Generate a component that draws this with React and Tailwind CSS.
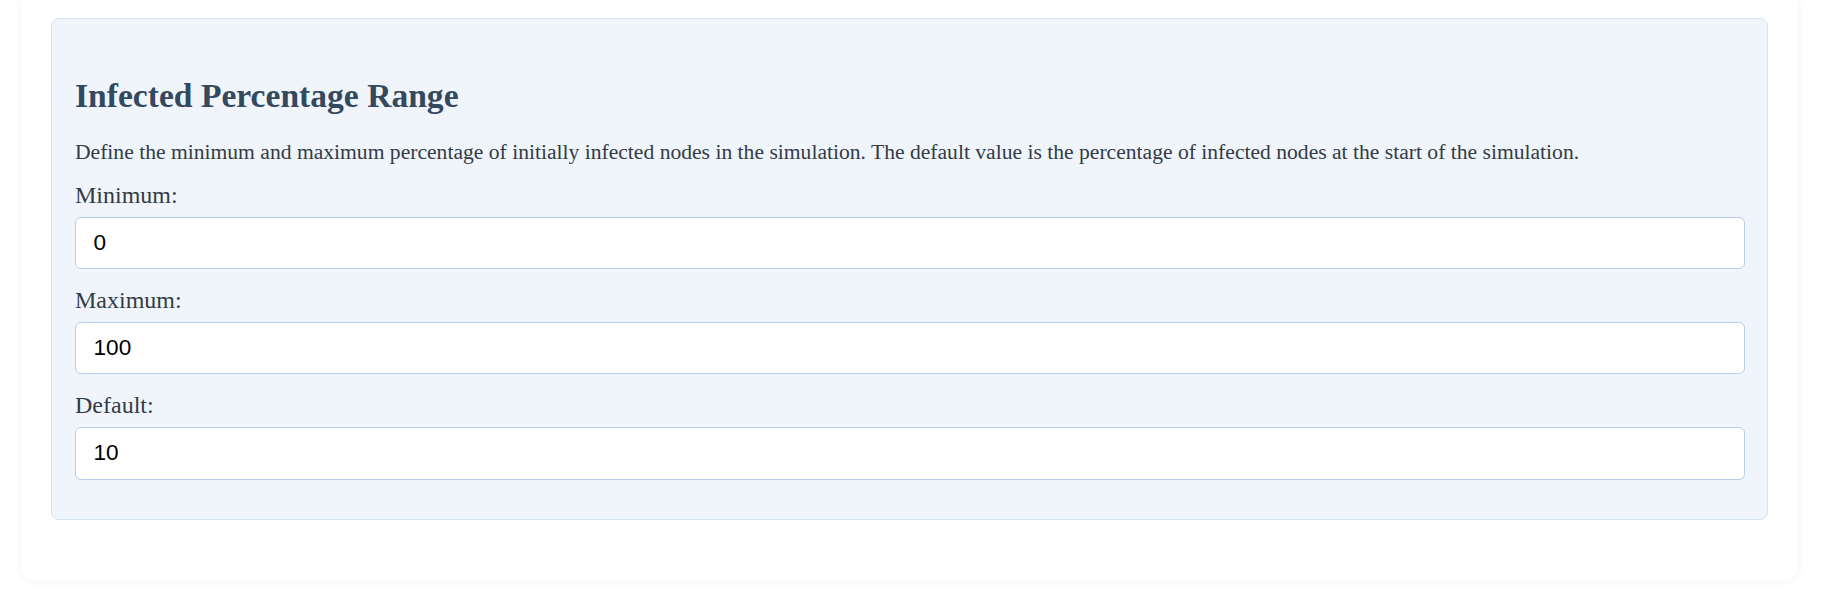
import React, { useState } from 'react';

const fields = [
  { id: 'min', label: 'Minimum:', value: '0' },
  { id: 'max', label: 'Maximum:', value: '100' },
  { id: 'def', label: 'Default:', value: '10' },
];

const RangeField = ({ id, label, value, onChange }) => (
  <div className="mb-[18px]">
    <label htmlFor={id} className="block text-[24px] leading-[27.6px] mb-[7px] text-[#333b46]">
      {label}
    </label>
    <input
      id={id}
      type="number"
      value={value}
      onChange={e => onChange(id, e.target.value)}
      className="block w-full h-[52.6px] px-[17.5px] bg-white border border-[#b4cfea] rounded-[6px] text-[22.6px] text-black font-['Liberation_Sans',Arial,sans-serif] outline-none [appearance:textfield] [&::-webkit-inner-spin-button]:appearance-none [&::-webkit-outer-spin-button]:appearance-none"
    />
  </div>
);

const App = () => {
  const [values, setValues] = useState(
    Object.fromEntries(fields.map(f => [f.id, f.value]))
  );

  const handleChange = (id, v) => {
    setValues(prev => ({ ...prev, [id]: v }));
  };

  return (
    <div className="min-h-screen bg-white font-['Liberation_Serif','Times_New_Roman',serif]">
      <div className="ml-[21px] w-[1777px] bg-white rounded-b-[14px] shadow-[0_0_8px_rgba(0,0,0,0.06)] px-[30px] pt-[18px] pb-[30px]">
        <div className="bg-[#f0f5fc] border border-[#d3e3f4] rounded-[8px] pl-[23px] pr-[22px] pt-[24px] pb-[21px] mb-[31px]">
          <h3 className="mt-[33.6px] text-[33.6px] leading-[38.6px] font-bold text-[#34495e]">
            Infected Percentage Range
          </h3>
          <p className="mt-[24.4px] mb-[17.7px] text-[21.6px] leading-[24.8px] text-[#333b46]">
            Define the minimum and maximum percentage of initially infected nodes in the simulation. The default value is the percentage of infected nodes at the start of the simulation.
          </p>
          {fields.map(f => (
            <RangeField
              key={f.id}
              id={f.id}
              label={f.label}
              value={values[f.id]}
              onChange={handleChange}
            />
          ))}
        </div>
      </div>
    </div>
  );
};

export default App;
